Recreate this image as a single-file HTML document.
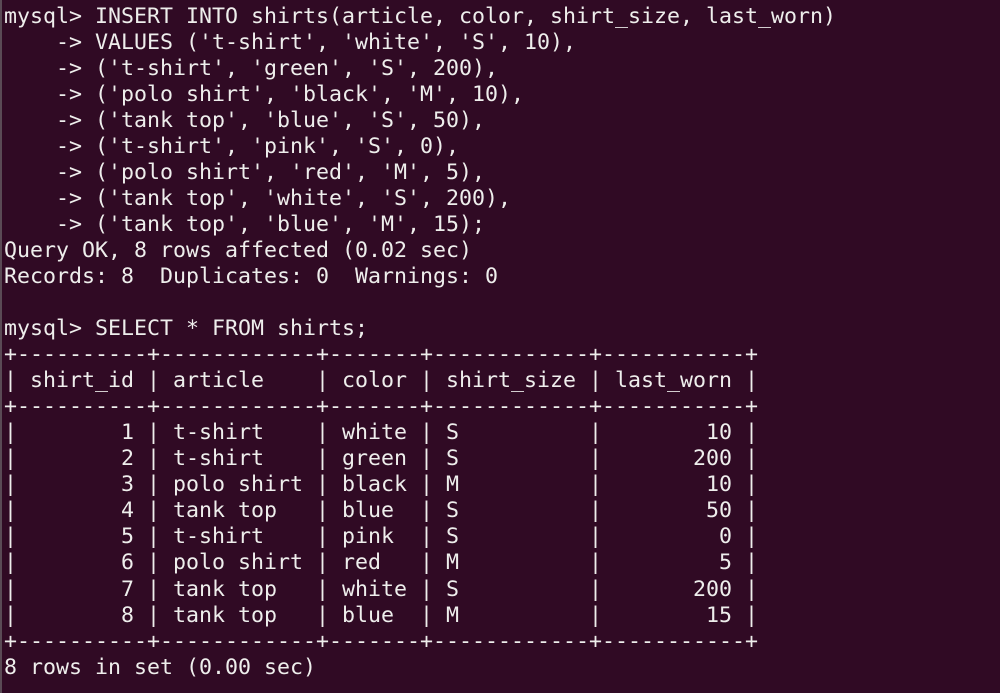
<!DOCTYPE html>
<html><head><meta charset="utf-8"><style>
html,body{margin:0;padding:0;}
body{width:1000px;height:693px;background:#300a24;overflow:hidden;position:relative;}
.l{position:absolute;left:0;top:0;width:2px;height:693px;background:#5a4a55;}
pre{margin:0;position:absolute;left:4px;top:3.5px;font-family:"DejaVu Sans Mono","Liberation Mono",monospace;font-size:21.6px;line-height:26.04px;color:#eeeeec;letter-spacing:0;}
</style></head><body><div class="l"></div><pre>mysql&gt; INSERT INTO shirts(article, color, shirt_size, last_worn)
    -&gt; VALUES ('t-shirt', 'white', 'S', 10),
    -&gt; ('t-shirt', 'green', 'S', 200),
    -&gt; ('polo shirt', 'black', 'M', 10),
    -&gt; ('tank top', 'blue', 'S', 50),
    -&gt; ('t-shirt', 'pink', 'S', 0),
    -&gt; ('polo shirt', 'red', 'M', 5),
    -&gt; ('tank top', 'white', 'S', 200),
    -&gt; ('tank top', 'blue', 'M', 15);
Query OK, 8 rows affected (0.02 sec)
Records: 8  Duplicates: 0  Warnings: 0

mysql&gt; SELECT * FROM shirts;
+----------+------------+-------+------------+-----------+
| shirt_id | article    | color | shirt_size | last_worn |
+----------+------------+-------+------------+-----------+
|        1 | t-shirt    | white | S          |        10 |
|        2 | t-shirt    | green | S          |       200 |
|        3 | polo shirt | black | M          |        10 |
|        4 | tank top   | blue  | S          |        50 |
|        5 | t-shirt    | pink  | S          |         0 |
|        6 | polo shirt | red   | M          |         5 |
|        7 | tank top   | white | S          |       200 |
|        8 | tank top   | blue  | M          |        15 |
+----------+------------+-------+------------+-----------+
8 rows in set (0.00 sec)
</pre></body></html>
